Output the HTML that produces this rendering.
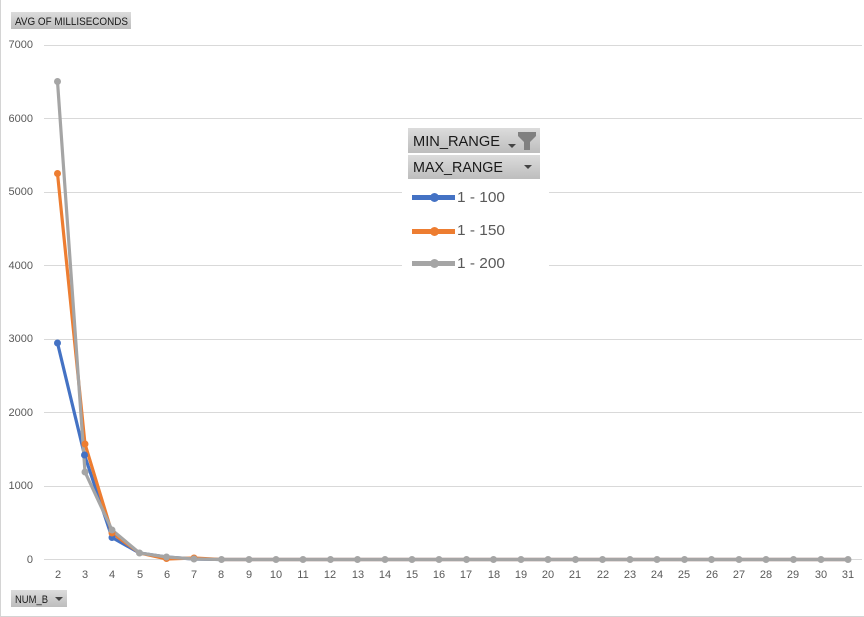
<!DOCTYPE html>
<html><head><meta charset="utf-8">
<style>
html,body{margin:0;padding:0;background:#fff;width:864px;height:617px;overflow:hidden}
svg{display:block}
text{font-family:"Liberation Sans",sans-serif}
</style></head><body>
<svg width="864" height="617" viewBox="0 0 864 617" xmlns="http://www.w3.org/2000/svg">
<defs>
<linearGradient id="g" x1="0" y1="0" x2="0" y2="1"><stop offset="0" stop-color="#dcdcdc"/><stop offset="1" stop-color="#bdbdbd"/></linearGradient>
</defs>
<rect x="0" y="0" width="1" height="617" fill="#d4d4d4"/>
<rect x="0" y="616" width="864" height="1" fill="#d4d4d4"/>
<g stroke="#d9d9d9" stroke-width="1">
<path d="M44 45.5H862M44 118.5H862M44 192.5H402M549 192.5H862M44 265.5H402M549 265.5H862M44 339.5H862M44 412.5H862M44 486.5H862M44 559.5H862"/>
</g>
<g font-size="11" fill="#595959" text-anchor="end">
<text x="33" y="48">7000</text><text x="33" y="122">6000</text><text x="33" y="195">5000</text><text x="33" y="269">4000</text><text x="33" y="342">3000</text><text x="33" y="416">2000</text><text x="33" y="489">1000</text><text x="33" y="563">0</text>
</g>
<g font-size="11" fill="#595959" text-anchor="middle">
<text x="58" y="578">2</text><text x="85" y="578">3</text><text x="112" y="578">4</text><text x="140" y="578">5</text><text x="167" y="578">6</text><text x="194" y="578">7</text><text x="221" y="578">8</text><text x="249" y="578">9</text><text x="276" y="578">10</text><text x="303" y="578">11</text><text x="330" y="578">12</text><text x="358" y="578">13</text><text x="385" y="578">14</text><text x="412" y="578">15</text><text x="439" y="578">16</text><text x="466" y="578">17</text><text x="494" y="578">18</text><text x="521" y="578">19</text><text x="548" y="578">20</text><text x="575" y="578">21</text><text x="603" y="578">22</text><text x="630" y="578">23</text><text x="657" y="578">24</text><text x="684" y="578">25</text><text x="712" y="578">26</text><text x="739" y="578">27</text><text x="766" y="578">28</text><text x="793" y="578">29</text><text x="821" y="578">30</text><text x="848" y="578">31</text>
</g>
<g fill="none" stroke-width="3.2" stroke-linejoin="round">
<path stroke="#4472c4" d="M57.5 343L84.5 455L112 537.500L139.5 553L166.5 557L194 559L221.5 559.5H848"/>
<path stroke="#ed7d31" d="M57.5 173.5L85 444L112 533L139.5 553L166.5 559L194 558L221.5 559.5H848"/>
<path stroke="#a5a5a5" d="M57.5 81.5L85 472L112 530L139.5 553L166.5 557L194 559L221.5 559.5H848"/>
</g>
<g fill="#4472c4"><circle cx="57.5" cy="343" r="3.5"/><circle cx="84.5" cy="455" r="3.5"/><circle cx="112" cy="537.5" r="3.5"/></g>
<g fill="#ed7d31"><circle cx="57.5" cy="173.5" r="3.5"/><circle cx="85" cy="444" r="3.5"/><circle cx="112" cy="533" r="3.5"/><circle cx="166.5" cy="558.5" r="3.5"/><circle cx="194" cy="558" r="3.5"/></g>
<g fill="#a5a5a5">
<circle cx="57.5" cy="81.5" r="3.5"/><circle cx="85" cy="472" r="3.5"/><circle cx="112" cy="530" r="3.5"/><circle cx="139.5" cy="553" r="3.5"/><circle cx="166.5" cy="557" r="3.5"/><circle cx="194" cy="559" r="3.5"/><circle cx="221.5" cy="559.5" r="3.5"/><circle cx="249" cy="559.5" r="3.5"/><circle cx="276" cy="559.5" r="3.5"/><circle cx="303" cy="559.5" r="3.5"/><circle cx="330.5" cy="559.5" r="3.5"/><circle cx="357.5" cy="559.5" r="3.5"/><circle cx="385" cy="559.5" r="3.5"/><circle cx="412" cy="559.5" r="3.5"/><circle cx="439" cy="559.5" r="3.5"/><circle cx="466.5" cy="559.5" r="3.5"/><circle cx="493.5" cy="559.5" r="3.5"/><circle cx="521" cy="559.5" r="3.5"/><circle cx="548" cy="559.5" r="3.5"/><circle cx="575.5" cy="559.5" r="3.5"/><circle cx="602.5" cy="559.5" r="3.5"/><circle cx="630" cy="559.5" r="3.5"/><circle cx="657" cy="559.5" r="3.5"/><circle cx="684.5" cy="559.5" r="3.5"/><circle cx="711.5" cy="559.5" r="3.5"/><circle cx="739" cy="559.5" r="3.5"/><circle cx="766" cy="559.5" r="3.5"/><circle cx="793.5" cy="559.5" r="3.5"/><circle cx="821" cy="559.5" r="3.5"/><circle cx="848" cy="559.5" r="3.5"/>
</g>
<rect x="11" y="12" width="120" height="17" fill="url(#g)"/>
<text x="15" y="25" font-size="11" fill="#1a1a1a" textLength="113" lengthAdjust="spacingAndGlyphs">AVG OF MILLISECONDS</text>
<rect x="11" y="590" width="56" height="17" fill="url(#g)"/>
<text x="15" y="603" font-size="11" fill="#1a1a1a" textLength="33" lengthAdjust="spacingAndGlyphs">NUM_B</text>
<path d="M55 597h8l-4 4z" fill="#444"/>
<rect x="408" y="128" width="132" height="25" fill="url(#g)"/>
<rect x="408" y="155" width="132" height="24" fill="url(#g)"/>
<text x="413" y="146" font-size="15" fill="#1a1a1a" textLength="87" lengthAdjust="spacingAndGlyphs">MIN_RANGE</text>
<text x="413" y="172" font-size="15" fill="#1a1a1a" textLength="90" lengthAdjust="spacingAndGlyphs">MAX_RANGE</text>
<path d="M508 144h8l-4 4z" fill="#444"/>
<path d="M518 132h18v4l-6 6v8h-6v-8l-6-6z" fill="#808080"/>
<path d="M524 165h8l-4 4z" fill="#444"/>
<rect x="412" y="195" width="43" height="5" fill="#4472c4"/><circle cx="434.500" cy="197.500" r="4.500" fill="#4472c4"/>
<rect x="412" y="229" width="43" height="5" fill="#ed7d31"/><circle cx="434.500" cy="231.500" r="4.500" fill="#ed7d31"/>
<rect x="412" y="261" width="43" height="5" fill="#a5a5a5"/><circle cx="434.500" cy="263.500" r="4.500" fill="#a5a5a5"/>
<g font-size="15" fill="#595959">
<text x="457" y="202" textLength="48" lengthAdjust="spacingAndGlyphs">1 - 100</text>
<text x="457" y="235" textLength="48" lengthAdjust="spacingAndGlyphs">1 - 150</text>
<text x="457" y="268" textLength="48" lengthAdjust="spacingAndGlyphs">1 - 200</text>
</g>
</svg>
</body></html>
